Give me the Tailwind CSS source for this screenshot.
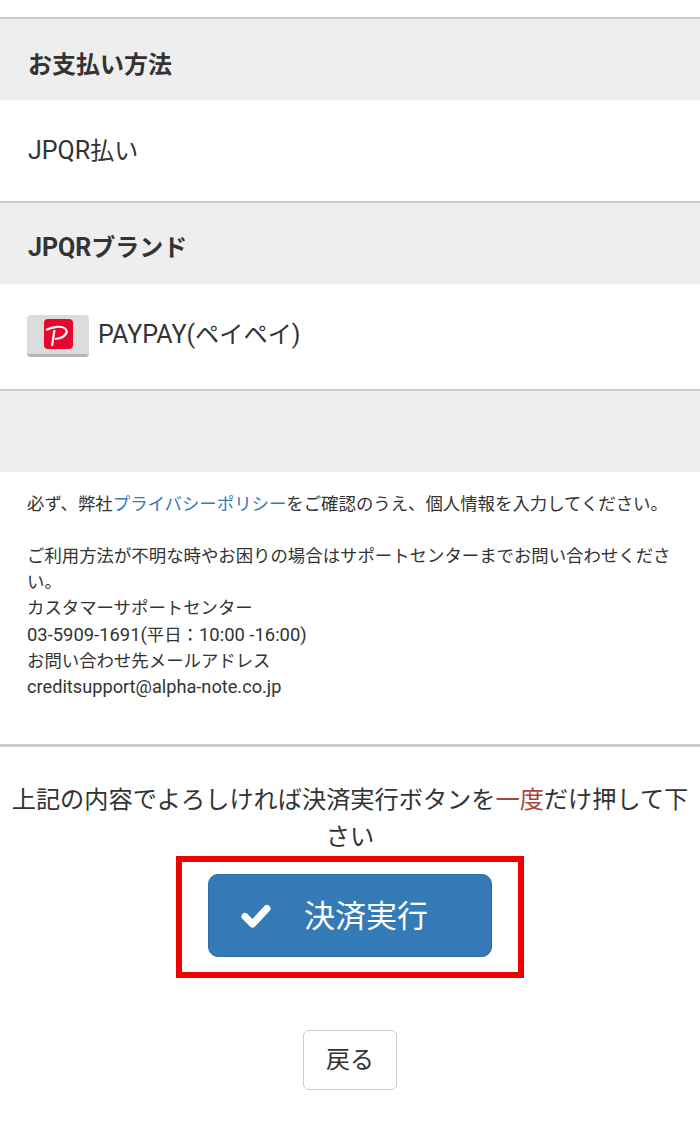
<!DOCTYPE html>
<html lang="ja">
<head>
<meta charset="UTF-8">
<title>決済確認</title>
<script src="https://cdn.jsdelivr.net/npm/@tailwindcss/browser@4"></script>
</head>
<body class="bg-white font-['Roboto','Noto_Sans_CJK_JP',sans-serif] text-[#333]">
<div class="w-[700px] h-[1123px] overflow-hidden">
  <div class="h-[17px] border-b-2 border-[#ccc] box-content"></div>
  <div class="bg-[#eee] h-[81px] flex items-center px-[28px] pt-[11px] text-[24px] font-bold">お支払い方法</div>
  <div class="h-[101px] pt-[33px] px-[28px] text-[24px] leading-[36px]"><span class="text-[25px]">JPQR</span>払い</div>
  <div class="border-t-2 border-[#ccc] bg-[#eee] h-[83px] flex items-center px-[28px] pt-[8px] text-[24px] font-bold"><span class="text-[25px]">JPQR</span>ブランド</div>
  <div class="h-[105px] flex items-center gap-[9px] px-[27px] text-[24.200px]">
    <div class="w-[62px] h-[42px] rounded-[4px] bg-[#dcdcdc] border-b-[3px] border-[#b5b5b5] flex items-center justify-center mt-[-2px]">
      <svg width="29" height="30" viewBox="0 0 29 30"><rect width="29" height="30" rx="4" fill="#e8062f"/><path d="M2 11C9 7 18 7 21 9.500C25 13 21 19 11 20M10.500 11L8 27" fill="none" stroke="#fff" stroke-width="2.200"/></svg>
    </div>
    <span class="mt-[-3px]"><span class="text-[25px]">PAYPAY(</span>ペイペイ<span class="text-[25px]">)</span></span>
  </div>
  <div class="border-t-2 border-[#ccc] bg-[#eee] h-[83px]"></div>
  <div class="h-[272px] px-[27px] pt-[19px] text-[17.400px] leading-[26.150px]">
    <p>必ず、弊社<span class="text-[#337ab7]">プライバシーポリシー</span>をご確認のうえ、個人情報を入力してください。</p>
    <p class="mt-[26px]">ご利用方法が不明な時やお困りの場合はサポートセンターまでお問い合わせください。</p>
    <p>カスタマーサポートセンター</p>
    <p><span class="text-[18.400px]">03-5909-1691(</span>平日：<span class="text-[18.400px]">10:00 -16:00)</span></p>
    <p>お問い合わせ先メールアドレス</p>
    <p class="text-[18.200px]">creditsupport@alpha-note.co.jp</p>
  </div>
  <div class="border-t-[3px] border-[#ccc] pt-[35px] px-[10px] text-center text-[24.200px] leading-[37px]">上記の内容でよろしければ決済実行ボタンを<span class="text-[#a94442]">一度</span>だけ押して下さい</div>
  <div class="flex justify-center">
    <div class="w-[348px] h-[122px] border-[6px] border-[#f00000] flex justify-center pt-[12px]">
      <button class="w-[284px] h-[83px] rounded-[10px] bg-[#337ab7] border border-[#2e6da4] text-white text-[31px] flex items-center pl-[32px] gap-[33px]">
        <svg width="30" height="24" viewBox="0 0 30 24"><path d="M4 12.500l7.500 7.500L26 4.500" fill="none" stroke="#fff" stroke-width="7" stroke-linecap="round" stroke-linejoin="round"/></svg>
        <span class="mt-[3px]">決済実行</span>
      </button>
    </div>
  </div>
  <div class="flex justify-center mt-[52px]">
    <button class="w-[94px] h-[60px] rounded-[6px] border border-[#ccc] bg-white text-[24px]">戻る</button>
  </div>
</div>
</body>
</html>
